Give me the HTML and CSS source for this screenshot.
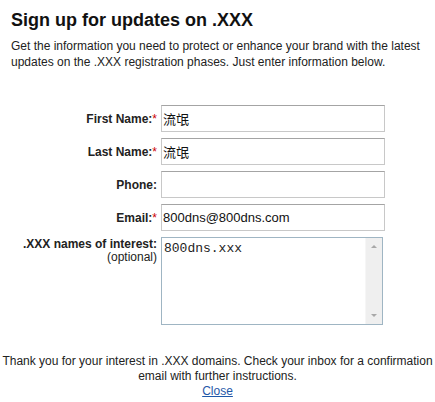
FILE: index.html
```html
<!DOCTYPE html>
<html>
  <head>
    <title>Sign up for updates on .XXX</title>
    <meta charset="UTF-8" />
    <link rel="stylesheet" href="styles.css">
  </head>
  <body>
    <div class="signup">
      <h2 class="title">Sign up for updates on .XXX</h2>
      <p class="intro">Get the information you need to protect or enhance your brand with the latest<br>updates on the .XXX registration phases. Just enter information below.</p>

      <form class="signup-form">
        <label class="field-label" for="firstName">First Name:<span class="req">*</span></label>
        <input class="field-input" id="firstName" type="text" value="流氓">

        <label class="field-label" for="lastName">Last Name:<span class="req">*</span></label>
        <input class="field-input" id="lastName" type="text" value="流氓">

        <label class="field-label" for="phone">Phone:</label>
        <input class="field-input" id="phone" type="text" value="">

        <label class="field-label" for="email">Email:<span class="req">*</span></label>
        <input class="field-input" id="email" type="text" value="800dns@800dns.com">

        <label class="field-label field-label-top" for="names">.XXX names of interest:<br><span class="optional">(optional)</span></label>
        <div class="area-box">
          <textarea class="field-area" id="names">800dns.xxx</textarea>
          <div class="scrollbar">
            <span class="arrow arrow-up"></span>
            <span class="arrow arrow-down"></span>
          </div>
        </div>
      </form>

      <p class="thanks">Thank you for your interest in .XXX domains. Check your inbox for a confirmation<br>email with further instructions.<br><a href="#" class="close-link">Close</a></p>
    </div>
  </body>
</html>
```

FILE: styles.css
```css
html {
  height: 100%;
}
body {
  margin: 0;
  background: #fff;
  font-family: "Liberation Sans", Arial, "Noto Sans CJK SC", sans-serif;
  color: #111;
}

.signup {
  padding-top: 10px;
}

.title {
  margin: 0 0 7px 11px;
  font-size: 18px;
  line-height: 21px;
  font-weight: bold;
  color: #111;
}

.intro {
  margin: 0 0 0 11px;
  font-size: 12px;
  line-height: 16px;
  color: #222;
}

.signup-form {
  display: grid;
  grid-template-columns: 157px 224px;
  column-gap: 4px;
  row-gap: 6px;
  margin-top: 35px;
}

.field-label {
  font-size: 12px;
  font-weight: bold;
  color: #222;
  text-align: right;
  align-self: center;
}
.field-label-top {
  align-self: start;
  padding-top: 1px;
  line-height: 13px;
}
.optional {
  font-weight: normal;
}
.req {
  color: #c00;
  font-weight: normal;
}

.field-input {
  box-sizing: border-box;
  height: 27px;
  width: 224px;
  margin: 0;
  padding: 0 1px;
  border: 1px solid #c8c8c8;
  border-top-color: #a4a4a4;
  font-family: "Liberation Sans", Arial, "Noto Sans CJK SC", sans-serif;
  font-size: 13px;
  color: #111;
  outline: none;
}

.area-box {
  display: flex;
  box-sizing: border-box;
  width: 222px;
  height: 88px;
  border: 1px solid #9fb5c3;
}
.field-area {
  flex: 1;
  margin: 0;
  padding: 3px 2px;
  border: 0;
  resize: none;
  overflow: hidden;
  font-family: "Liberation Mono", "Courier New", monospace;
  font-size: 13px;
  color: #222;
  outline: none;
}
.scrollbar {
  width: 16px;
  background: #efefef;
  border-left: 1px solid #f6f6f6;
  display: flex;
  flex-direction: column;
  justify-content: space-between;
  align-items: center;
  padding: 7px 0 7px;
}
.arrow {
  width: 0;
  height: 0;
  border-left: 3px solid transparent;
  border-right: 3px solid transparent;
}
.arrow-up {
  border-bottom: 3px solid #a8a8a8;
}
.arrow-down {
  border-top: 3px solid #a8a8a8;
}

.thanks {
  margin: 29px 0 0;
  text-align: center;
  font-size: 12px;
  line-height: 15px;
  color: #222;
  white-space: nowrap;
}
.close-link {
  color: #1f57a8;
  text-decoration: underline;
}
```
